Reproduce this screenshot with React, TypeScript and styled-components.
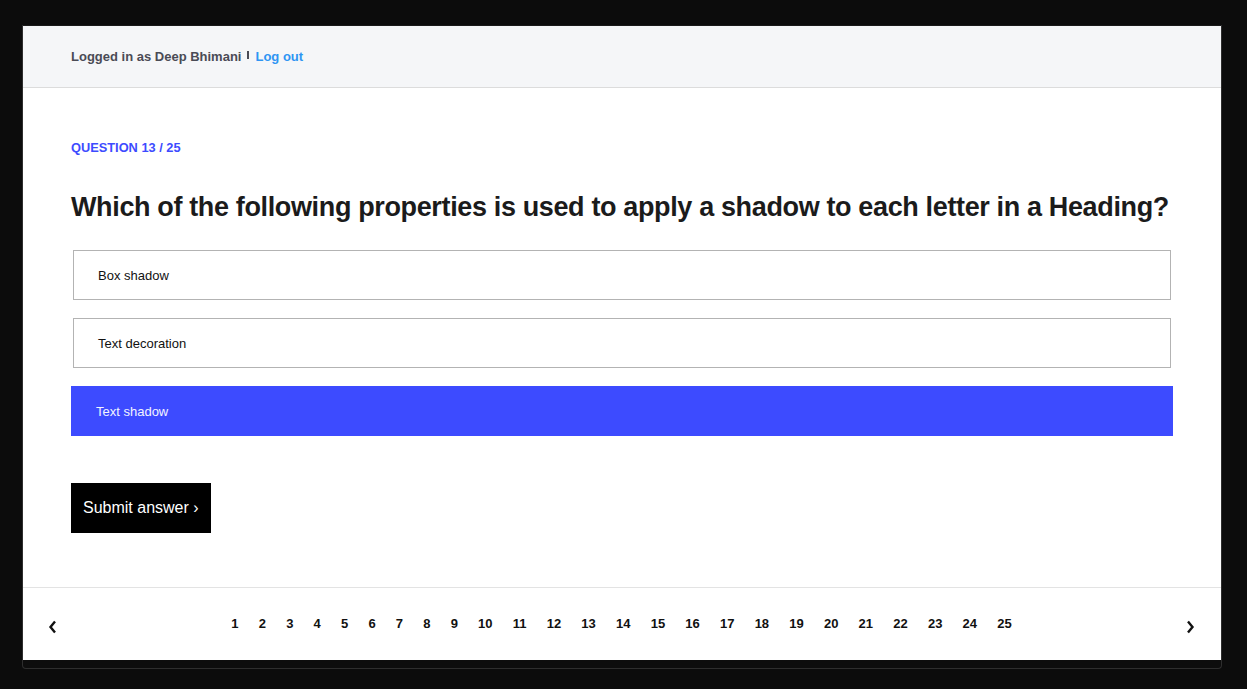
import React, { useState } from "react";
import styled, { createGlobalStyle } from "styled-components";

const Global = createGlobalStyle`
  html, body { margin: 0; padding: 0; background: #0c0c0c; }
  body { font-family: "Liberation Sans", Arial, Helvetica, sans-serif; }
  * { box-sizing: border-box; }
`;

const Page = styled.div`
  width: 1247px;
  height: 689px;
  padding: 25px 0 0 22px;
  background: #0c0c0c;
`;

const Frame = styled.div`
  width: 1200px;
  border: 1px solid #2e2e2e;
  border-top: none;
  border-radius: 0 0 4px 4px;
  padding-bottom: 8px;
  background: #0d0d0d;
`;

const Card = styled.div`
  background: #ffffff;
  border-top: 1px solid #1a1a1a;
`;

const Header = styled.header`
  height: 62px;
  background: #f5f6f8;
  border-bottom: 1px solid #dcdcdc;
  display: flex;
  align-items: center;
  padding: 0 48px;
  font-size: 13px;
  font-weight: 700;
`;

const UserText = styled.span`
  color: #4a4b55;
`;

const Sep = styled.span`
  display: inline-block;
  width: 2px;
  height: 8px;
  background: #4a4b55;
  margin: 0 6px 0 6px;
  transform: translateY(-2px);
`;

const LogOut = styled.a`
  color: #2f95f3;
  text-decoration: none;
  cursor: pointer;
`;

const Main = styled.main`
  padding: 50px 48px 54px;
`;

const Label = styled.div`
  color: #3d4bff;
  font-size: 12.8px;
  font-weight: 700;
  line-height: 20px;
`;

const Question = styled.h1`
  margin: 31px 0 25px;
  font-size: 27px;
  line-height: 36px;
  font-weight: 700;
  color: #1b1b1b;
  letter-spacing: -0.36px;
  white-space: nowrap;
`;

const Options = styled.div`
  display: flex;
  flex-direction: column;
  gap: 18px;
`;

const Option = styled.div<{ $selected?: boolean }>`
  height: 50px;
  display: flex;
  align-items: center;
  font-size: 13px;
  cursor: pointer;
  ${(p) =>
    p.$selected
      ? `
    background: #3d4bff;
    color: #f2f3ff;
    padding: 0 25px;
  `
      : `
    margin: 0 2px;
    border: 1px solid #b3b3b3;
    color: #111;
    padding: 0 24px;
  `}
`;

const Submit = styled.button`
  margin-top: 47px;
  height: 50px;
  width: 140px;
  background: #000;
  color: #fff;
  border: none;
  font-family: inherit;
  font-size: 16px;
  padding: 0 12px;
  text-align: left;
  cursor: pointer;
`;

const Footer = styled.footer`
  border-top: 1px solid #e3e3e3;
  height: 73px;
  display: flex;
  align-items: center;
  justify-content: space-between;
  padding: 0 24px 0 23px;
`;

const Arrow = styled.button`
  width: 12px;
  height: 16px;
  padding: 0;
  border: none;
  background: none;
  display: flex;
  align-items: center;
  justify-content: center;
  margin-top: 5px;
  cursor: pointer;
`;

const Pages = styled.div`
  display: flex;
  align-items: center;
  margin-top: -2px;
`;

const PageNum = styled.span<{ $active?: boolean }>`
  padding: 0 10.1px;
  font-size: 13px;
  font-weight: 700;
  color: #111;
  cursor: pointer;
`;

const options = ["Box shadow", "Text decoration", "Text shadow"];

export default function App() {
  const [sel, setSel] = useState(2);
  return (
    <Page>
      <Global />
      <Frame>
        <Card>
          <Header>
            <UserText>Logged in as Deep Bhimani</UserText>
            <Sep />
            <LogOut>Log out</LogOut>
          </Header>
          <Main>
            <Label>QUESTION 13 / 25</Label>
            <Question>
              Which of the following properties is used to apply a shadow to each letter in a Heading?
            </Question>
            <Options>
              {options.map((o, i) => (
                <Option key={o} $selected={i === sel} onClick={() => setSel(i)}>
                  {o}
                </Option>
              ))}
            </Options>
            <Submit>Submit answer ›</Submit>
          </Main>
          <Footer>
            <Arrow aria-label="Previous">
              <svg width="9" height="14" viewBox="0 0 9 14">
                <polyline points="7,1.5 2.5,7 7,12.5" fill="none" stroke="#111" strokeWidth="2.4" />
              </svg>
            </Arrow>
            <Pages>
              {Array.from({ length: 25 }, (_, i) => (
                <PageNum key={i} $active={i === 12}>
                  {i + 1}
                </PageNum>
              ))}
            </Pages>
            <Arrow aria-label="Next">
              <svg width="9" height="14" viewBox="0 0 9 14">
                <polyline points="2,1.5 6.5,7 2,12.5" fill="none" stroke="#111" strokeWidth="2.4" />
              </svg>
            </Arrow>
          </Footer>
        </Card>
      </Frame>
    </Page>
  );
}
